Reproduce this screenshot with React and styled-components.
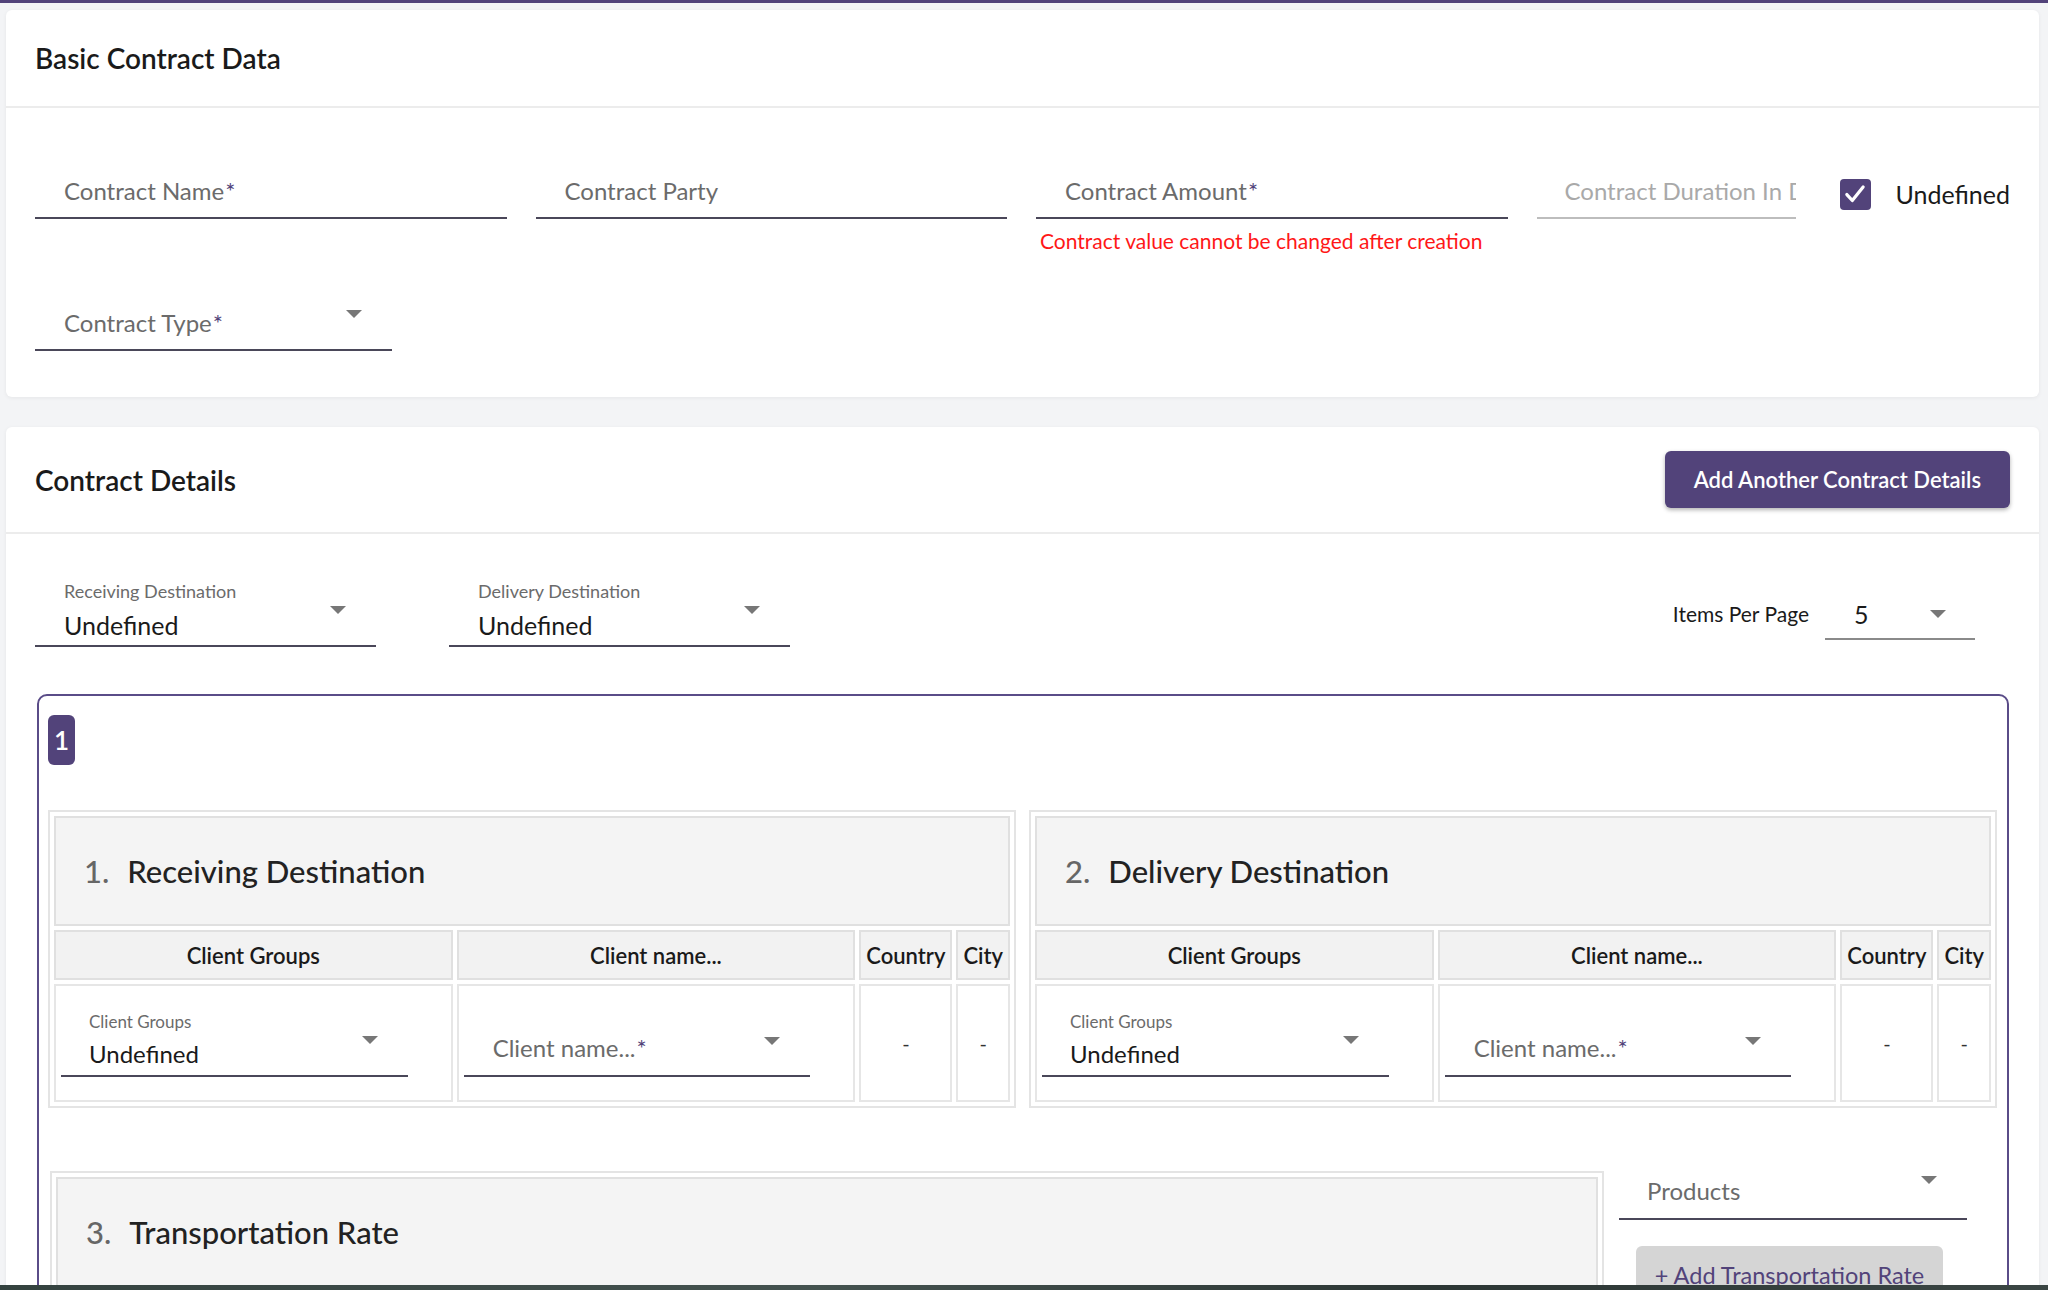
import React from 'react';
import styled, { createGlobalStyle } from 'styled-components';

const purple = '#52437a';
const line = '#4a4759';

const GlobalStyle = createGlobalStyle`
  * { box-sizing: border-box; }
  html, body { margin: 0; height: 100%; overflow: hidden; }
  body {
    background: #f3f4f6;
    font-family: Lato, 'Noto Sans', sans-serif;
    color: #1f1f1f;
  }
`;

const TopStripe = styled.div`
  height: 3px;
  background: ${purple};
`;

const Page = styled.div`
  padding: 7px 9px 0 6px;
  display: flex;
  flex-direction: column;
  gap: 30px;
`;

const Card = styled.section`
  background: #fff;
  border-radius: 6px;
  box-shadow: 0 1px 4px rgba(0, 0, 0, 0.06);
`;

const CardHeader = styled.div`
  display: flex;
  align-items: center;
  justify-content: space-between;
  min-height: 98px;
  padding: 24px 29px 24px;
  border-bottom: 2px solid #ececec;
`;

const CardTitle = styled.h2`
  margin: 0;
  font-size: 28px;
  font-weight: 600;
  color: #1a1a1a;
`;

const PrimaryButton = styled.button`
  height: 57px;
  padding: 0 29px;
  border: none;
  border-radius: 6px;
  background: ${purple};
  color: #fff;
  font-family: inherit;
  font-size: 22px;
  font-weight: 600;
  box-shadow: 0 2px 4px rgba(0, 0, 0, 0.3);
`;

const BasicBody = styled.div`
  padding: 53px 29px 46px;
  display: flex;
  flex-direction: column;
  gap: 40px;
`;

const FieldRow = styled.div`
  display: flex;
  gap: 29px;
  align-items: flex-start;
`;

const FieldCol = styled.div`
  flex: ${(p) => (p.$w ? `0 0 ${p.$w}px` : '1 1 0')};
  min-width: 0;
  display: flex;
  flex-direction: column;
`;

const Field = styled.div`
  height: ${(p) => p.$h || 58}px;
  display: flex;
  align-items: flex-end;
  justify-content: space-between;
  padding: 0 ${(p) => (p.$disabled ? 0 : 30)}px ${(p) => p.$pb ?? 12}px ${(p) => p.$pl ?? 29}px;
  border-bottom: 2px solid ${(p) => (p.$disabled ? '#bdbdbd' : line)};
  overflow: hidden;
`;

const Placeholder = styled.span`
  font-size: 24px;
  line-height: 28px;
  color: ${(p) => (p.$disabled ? '#a9a9a9' : '#6b6b6b')};
  white-space: nowrap;
`;

const Star = styled.span`
  color: ${purple};
  margin-left: 1px;
`;

const HelperText = styled.div`
  margin-top: 10px;
  padding-left: 4px;
  font-size: 21px;
  line-height: 24px;
  color: #ff1717;
  white-space: nowrap;
`;

const CheckGroup = styled.label`
  display: flex;
  align-items: center;
  gap: 25px;
  height: 58px;
  padding-top: 8px;
  margin-left: 15px;
  flex-shrink: 0;
`;

const CheckBox = styled.span`
  width: 31px;
  height: 31px;
  border-radius: 4px;
  background: ${purple};
  display: flex;
  align-items: center;
  justify-content: center;
`;

const CheckText = styled.span`
  font-size: 25px;
  color: #1a1a1a;
`;

const Caret = styled.span`
  flex-shrink: 0;
  width: 0;
  height: 0;
  border-left: 8px solid transparent;
  border-right: 8px solid transparent;
  border-top: 8px solid #777;
  margin-bottom: ${(p) => p.$lift || 0}px;
`;

const DetailsBody = styled.div`
  padding: 46px 29px 0;
`;

const FilterRow = styled.div`
  display: flex;
  align-items: flex-start;
  gap: 73px;
`;

const SelectBox = styled.div`
  width: ${(p) => (p.$w ? `${p.$w}px` : '100%')};
  display: flex;
  align-items: center;
  justify-content: space-between;
  padding: 0 30px ${(p) => (p.$compact ? 8 : 6)}px ${(p) => (p.$compact ? 28 : 29)}px;
  border-bottom: 2px solid ${line};
`;

const SelectStack = styled.div`
  display: flex;
  flex-direction: column;
  gap: 9px;
`;

const SmallLabel = styled.span`
  font-size: ${(p) => (p.$compact ? 17 : 18)}px;
  line-height: ${(p) => (p.$compact ? 20 : 22)}px;
  color: #6b6b6b;
`;

const Value = styled.span`
  font-size: ${(p) => (p.$compact ? 24 : 25)}px;
  line-height: ${(p) => (p.$compact ? 26 : 28)}px;
  color: #1a1a1a;
`;

const ItemsGroup = styled.div`
  margin: 20px 35px 0 auto;
  display: flex;
  align-items: flex-end;
  gap: 16px;
`;

const ItemsText = styled.span`
  font-size: 21px;
  line-height: 28px;
  padding-bottom: 12px;
  color: #1a1a1a;
`;

const ItemsSelect = styled.div`
  width: 150px;
  display: flex;
  align-items: center;
  justify-content: space-between;
  padding: 0 29px 10px 29px;
  border-bottom: 2px solid #8a8a8a;
`;

const GroupBox = styled.div`
  margin: 47px 1px 0 2px;
  border: 2px solid #5a4c88;
  border-radius: 10px;
  padding: 19px 10px 40px 9px;
`;

const Badge = styled.div`
  width: 27px;
  height: 50px;
  border-radius: 6px;
  background: ${purple};
  color: #fff;
  font-size: 26px;
  font-weight: 600;
  display: flex;
  align-items: center;
  justify-content: center;
`;

const TablesGrid = styled.div`
  margin-top: 45px;
  display: grid;
  grid-template-columns: 1fr 1fr;
  gap: 13px;
`;

const DestTable = styled.div`
  display: grid;
  grid-template-columns: ${(p) => p.$cols || '1fr'};
  gap: 4px;
  padding: 4px;
  border: 2px solid #e4e4e4;
  flex: 1;
`;

const TitleCell = styled.div`
  grid-column: 1 / -1;
  height: 110px;
  background: #f4f4f4;
  border: 2px solid #e0e0e0;
  display: flex;
  align-items: center;
  padding-left: 28px;
  font-size: 31px;
  font-weight: 500;
  color: #222;
`;

const Num = styled.span`
  color: #666;
  margin-right: 18px;
`;

const HeadCell = styled.div`
  height: 50px;
  background: #f2f2f2;
  border: 2px solid #e0e0e0;
  display: flex;
  align-items: center;
  justify-content: center;
  padding: 0 5px;
  font-size: 22px;
  font-weight: 600;
  white-space: nowrap;
  color: #1a1a1a;
`;

const BodyCell = styled.div`
  height: 118px;
  border: 2px solid #e6e6e6;
  display: flex;
  align-items: ${(p) => (p.$center ? 'center' : 'flex-end')};
  justify-content: center;
  padding: ${(p) => (p.$center ? '0' : '0 43px 23px 5px')};
  font-size: 20px;
  color: #333;
`;

const RateRow = styled.div`
  margin: 63px 30px 0 2px;
  display: flex;
  align-items: flex-start;
  gap: 15px;
`;

const Side = styled.div`
  width: 348px;
  display: flex;
  flex-direction: column;
`;

const GhostButton = styled.button`
  margin: 26px 24px 0 17px;
  height: 58px;
  border: none;
  border-radius: 6px;
  background: #d5d5d5;
  color: ${purple};
  font-family: inherit;
  font-size: 23.5px;
`;

const Taskbar = styled.div`
  position: fixed;
  left: 0;
  right: 0;
  bottom: 0;
  height: 5px;
  background: linear-gradient(90deg, #34423f, #44524f 40%, #2c3634 70%, #3b4644);
`;

const Check = () => (
  <svg width="26" height="26" viewBox="0 0 24 24" fill="none">
    <path d="M4.5 12.5l5 5.5L19.5 5.5" stroke="#fff" strokeWidth="3" strokeLinecap="round" strokeLinejoin="round" />
  </svg>
);

const DestinationTable = ({ num, title }) => (
  <DestTable $cols="1fr 1fr auto auto">
    <TitleCell>
      <Num>{num}.</Num>
      {title}
    </TitleCell>
    <HeadCell>Client Groups</HeadCell>
    <HeadCell>Client name...</HeadCell>
    <HeadCell>Country</HeadCell>
    <HeadCell>City</HeadCell>
    <BodyCell>
      <SelectBox $compact>
        <SelectStack>
          <SmallLabel $compact>Client Groups</SmallLabel>
          <Value $compact>Undefined</Value>
        </SelectStack>
        <Caret />
      </SelectBox>
    </BodyCell>
    <BodyCell>
      <Field $h={43} $pb={13} style={{ width: '100%' }}>
        <Placeholder>
          Client name...<Star>*</Star>
        </Placeholder>
        <Caret $lift={17} />
      </Field>
    </BodyCell>
    <BodyCell $center>-</BodyCell>
    <BodyCell $center>-</BodyCell>
  </DestTable>
);

export default function App() {
  return (
    <>
      <GlobalStyle />
      <TopStripe />
      <Page>
        <Card>
          <CardHeader>
            <CardTitle>Basic Contract Data</CardTitle>
          </CardHeader>
          <BasicBody>
            <FieldRow>
              <FieldCol>
                <Field>
                  <Placeholder>
                    Contract Name<Star>*</Star>
                  </Placeholder>
                </Field>
              </FieldCol>
              <FieldCol>
                <Field>
                  <Placeholder>Contract Party</Placeholder>
                </Field>
              </FieldCol>
              <FieldCol>
                <Field>
                  <Placeholder>
                    Contract Amount<Star>*</Star>
                  </Placeholder>
                </Field>
                <HelperText>Contract value cannot be changed after creation</HelperText>
              </FieldCol>
              <FieldCol $w={259}>
                <Field $disabled $pl={28}>
                  <Placeholder $disabled>Contract Duration In Days</Placeholder>
                </Field>
              </FieldCol>
              <CheckGroup>
                <CheckBox>
                  <Check />
                </CheckBox>
                <CheckText>Undefined</CheckText>
              </CheckGroup>
            </FieldRow>
            <FieldRow>
              <FieldCol $w={357}>
                <Field>
                  <Placeholder>
                    Contract Type<Star>*</Star>
                  </Placeholder>
                  <Caret $lift={19} />
                </Field>
              </FieldCol>
            </FieldRow>
          </BasicBody>
        </Card>

        <Card>
          <CardHeader>
            <CardTitle>Contract Details</CardTitle>
            <PrimaryButton>Add Another Contract Details</PrimaryButton>
          </CardHeader>
          <DetailsBody>
            <FilterRow>
              <SelectBox $w={341}>
                <SelectStack>
                  <SmallLabel>Receiving Destination</SmallLabel>
                  <Value>Undefined</Value>
                </SelectStack>
                <Caret />
              </SelectBox>
              <SelectBox $w={341}>
                <SelectStack>
                  <SmallLabel>Delivery Destination</SmallLabel>
                  <Value>Undefined</Value>
                </SelectStack>
                <Caret />
              </SelectBox>
              <ItemsGroup>
                <ItemsText>Items Per Page</ItemsText>
                <ItemsSelect>
                  <Value>5</Value>
                  <Caret />
                </ItemsSelect>
              </ItemsGroup>
            </FilterRow>

            <GroupBox>
              <Badge>1</Badge>
              <TablesGrid>
                <DestinationTable num={1} title="Receiving Destination" />
                <DestinationTable num={2} title="Delivery Destination" />
              </TablesGrid>
              <RateRow>
                <DestTable>
                  <TitleCell>
                    <Num>3.</Num>
                    Transportation Rate
                  </TitleCell>
                </DestTable>
                <Side>
                  <Field $h={49} $pb={13} $pl={28}>
                    <Placeholder>Products</Placeholder>
                    <Caret $lift={21} />
                  </Field>
                  <GhostButton>+ Add Transportation Rate</GhostButton>
                </Side>
              </RateRow>
            </GroupBox>
          </DetailsBody>
        </Card>
      </Page>
      <Taskbar />
    </>
  );
}
